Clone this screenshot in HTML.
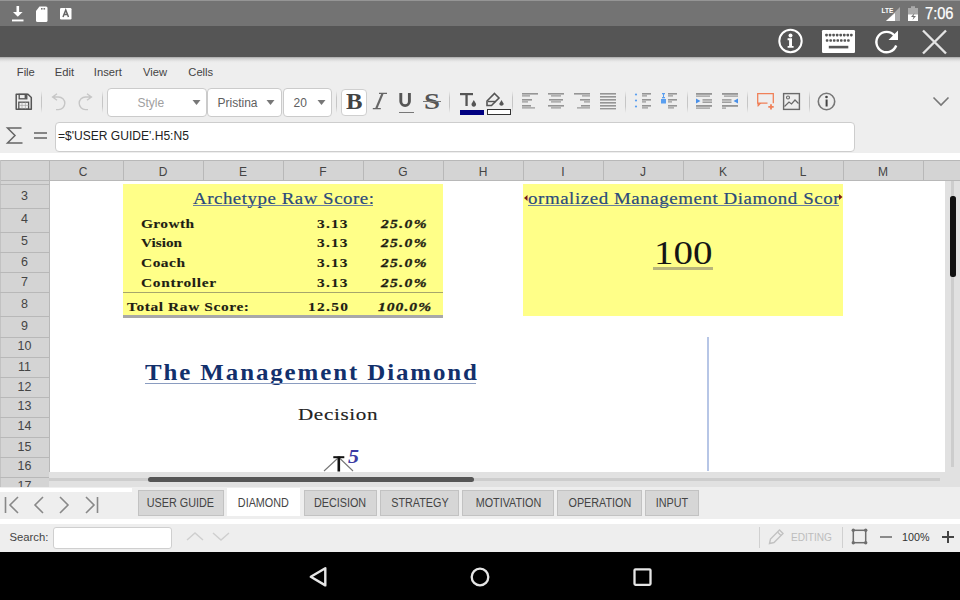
<!DOCTYPE html>
<html><head><meta charset="utf-8">
<style>
*{margin:0;padding:0;box-sizing:border-box}
html,body{width:960px;height:600px;overflow:hidden;background:#fff;font-family:"Liberation Sans",sans-serif}
.a{position:absolute}
.t{position:absolute;white-space:nowrap;line-height:1}
</style></head><body>

<div class="a" style="left:0px;top:0px;width:960px;height:26px;background:#737373;"></div>
<div class="a" style="left:0px;top:0px;width:960px;height:1px;background:#959595;"></div>
<svg class="a" style="left:10px;top:4px;" width="16" height="20" viewBox="0 0 16 20"><rect x="6.5" y="2" width="2.6" height="7.5" fill="#fff"/><path d="M3 8h9.6l-4.8 4.8z" fill="#fff"/><rect x="2" y="15.5" width="11.5" height="1.9" fill="#fff"/></svg>
<svg class="a" style="left:34px;top:4px;" width="16" height="20" viewBox="0 0 16 20"><path d="M5.5 2.5h6.5a1.5 1.5 0 0 1 1.5 1.5v12.5a1.5 1.5 0 0 1-1.5 1.5h-8.5a1.5 1.5 0 0 1-1.5-1.5v-9.5z" fill="#fff"/><rect x="7" y="4" width="1.6" height="1.6" fill="#777"/><rect x="9.5" y="4" width="1.6" height="1.6" fill="#777"/></svg>
<svg class="a" style="left:58px;top:6px;" width="16" height="16" viewBox="0 0 16 16"><rect x="2" y="2" width="11.5" height="11.5" rx="1.2" fill="#fff"/><path d="M5 11l2.75-7 2.75 7M6 8.6h3.5" stroke="#666" stroke-width="1.5" fill="none"/></svg>
<svg class="a" style="left:880px;top:4px;" width="24" height="20" viewBox="0 0 24 20"><path d="M6 17h14V3z" fill="#a8a8a8"/><path d="M6 17h9V9z" fill="#fff"/><text x="1.5" y="8.5" font-family="Liberation Sans" font-size="6.5" font-weight="bold" fill="#fff">LTE</text></svg>
<svg class="a" style="left:906px;top:4px;" width="14" height="20" viewBox="0 0 14 20"><rect x="2" y="4" width="10" height="13" fill="#fff"/><rect x="2" y="4" width="10" height="6.5" fill="#aaa"/><rect x="5" y="2.2" width="4" height="2" fill="#aaa"/><path d="M8.5 9l-3.5 4h2.5l-1 3 3.5-4h-2.5z" fill="#737373"/></svg>
<div class="t" style="left:924.50px;top:6.06px;font-size:16px;font-family:'Liberation Sans',sans-serif;color:#fff;font-weight:normal;font-style:normal;transform:scaleX(0.9152032112393377);transform-origin:0 0;-webkit-text-stroke:0.25px #fff;">7:06</div>
<div class="a" style="left:0px;top:26px;width:960px;height:31px;background:#555;"></div>
<svg class="a" style="left:776px;top:28px;" width="28" height="28" viewBox="0 0 28 28"><circle cx="14.5" cy="13" r="11.2" stroke="#fff" stroke-width="2" fill="none"/><circle cx="14.5" cy="7.4" r="2" fill="#fff"/><path d="M11.6 10.3h4.4v7.6h1.6v1.9h-6v-1.9h1.5v-5.7h-1.5z" fill="#fff"/></svg>
<svg class="a" style="left:821px;top:29px;" width="36" height="26" viewBox="0 0 36 26"><rect x="1" y="1" width="33" height="23" rx="1.2" fill="#fff"/><rect x="4.20" y="4.8" width="2.6" height="2.6" rx="0.8" fill="#555"/><rect x="7.75" y="4.8" width="2.6" height="2.6" rx="0.8" fill="#555"/><rect x="11.30" y="4.8" width="2.6" height="2.6" rx="0.8" fill="#555"/><rect x="14.85" y="4.8" width="2.6" height="2.6" rx="0.8" fill="#555"/><rect x="18.40" y="4.8" width="2.6" height="2.6" rx="0.8" fill="#555"/><rect x="21.95" y="4.8" width="2.6" height="2.6" rx="0.8" fill="#555"/><rect x="25.50" y="4.8" width="2.6" height="2.6" rx="0.8" fill="#555"/><rect x="29.05" y="4.8" width="2.6" height="2.6" rx="0.8" fill="#555"/><rect x="4.80" y="10.2" width="2.6" height="2.6" rx="0.8" fill="#555"/><rect x="8.35" y="10.2" width="2.6" height="2.6" rx="0.8" fill="#555"/><rect x="11.90" y="10.2" width="2.6" height="2.6" rx="0.8" fill="#555"/><rect x="15.45" y="10.2" width="2.6" height="2.6" rx="0.8" fill="#555"/><rect x="19.00" y="10.2" width="2.6" height="2.6" rx="0.8" fill="#555"/><rect x="22.55" y="10.2" width="2.6" height="2.6" rx="0.8" fill="#555"/><rect x="26.10" y="10.2" width="2.6" height="2.6" rx="0.8" fill="#555"/><rect x="7.8" y="16.8" width="19.5" height="2.6" fill="#555"/></svg>
<svg class="a" style="left:872px;top:27px;" width="30" height="30" viewBox="0 0 30 30"><path d="M22.4 8.5A10.2 10.2 0 1 0 24.2 18.5" stroke="#fff" stroke-width="2.4" fill="none"/><path d="M26 3.5v9.5h-9.5z" fill="#fff"/></svg>
<svg class="a" style="left:920px;top:28px;" width="30" height="28" viewBox="0 0 30 28"><path d="M3 2.5L26 25.5M26 2.5L3 25.5" stroke="#e4e4e4" stroke-width="2.4"/></svg>
<div class="a" style="left:0px;top:57px;width:960px;height:96px;background:#eeeeee;"></div>
<div class="a" style="left:0px;top:57px;width:960px;height:6px;background:linear-gradient(#a8a8a8 0px,#cdcdcd 1.5px,#dedede 3px,#e9e9e9 4.5px,#eee 6px);"></div>
<div class="t" style="left:16.80px;top:66.52px;font-size:11.2px;font-family:'Liberation Sans',sans-serif;color:#444;font-weight:normal;font-style:normal;">File</div>
<div class="t" style="left:54.80px;top:66.52px;font-size:11.2px;font-family:'Liberation Sans',sans-serif;color:#444;font-weight:normal;font-style:normal;">Edit</div>
<div class="t" style="left:93.80px;top:66.52px;font-size:11.2px;font-family:'Liberation Sans',sans-serif;color:#444;font-weight:normal;font-style:normal;">Insert</div>
<div class="t" style="left:143.10px;top:66.52px;font-size:11.2px;font-family:'Liberation Sans',sans-serif;color:#444;font-weight:normal;font-style:normal;">View</div>
<div class="t" style="left:188.30px;top:66.52px;font-size:11.2px;font-family:'Liberation Sans',sans-serif;color:#444;font-weight:normal;font-style:normal;">Cells</div>
<svg class="a" style="left:14px;top:92px;" width="20" height="20" viewBox="0 0 20 20"><path d="M2.2 2.2h11.8l3.3 3.3v11.8h-15.1z" stroke="#555" stroke-width="1.5" fill="none" stroke-linejoin="round"/><rect x="5.2" y="2.4" width="7.6" height="4.4" stroke="#555" stroke-width="1.3" fill="none"/><rect x="10.6" y="2.6" width="2.2" height="4" fill="#555"/><rect x="4.8" y="10.2" width="9.8" height="7" stroke="#555" stroke-width="1.3" fill="none"/><path d="M4.8 13.4h9.8M8 10.2v7M11.4 10.2v7" stroke="#999" stroke-width="0.6"/></svg>
<div class="a" style="left:41px;top:91px;width:1.2px;height:22px;background:linear-gradient(rgba(200,200,200,0),#c6c6c6 30%,#c6c6c6 70%,rgba(200,200,200,0));"></div>
<svg class="a" style="left:50px;top:92px;" width="18" height="20" viewBox="0 0 18 20"><path d="M7 1.8L2.6 5 7 8.2M2.6 5H8.5A6.3 6.3 0 0 1 8.5 17.6H6" stroke="#c6c6c6" stroke-width="1.4" fill="none"/></svg>
<svg class="a" style="left:76px;top:92px;" width="18" height="20" viewBox="0 0 18 20"><path d="M11 1.8L15.4 5 11 8.2M15.4 5H9.5A6.3 6.3 0 0 0 9.5 17.6H12" stroke="#c6c6c6" stroke-width="1.4" fill="none"/></svg>
<div class="a" style="left:102px;top:91px;width:1.2px;height:22px;background:linear-gradient(rgba(200,200,200,0),#c6c6c6 30%,#c6c6c6 70%,rgba(200,200,200,0));"></div>
<div class="a" style="left:107px;top:88px;width:99.5px;height:28.5px;background:#fff;border:1.5px solid #cbcbcb;border-radius:4px"></div>
<div class="t" style="left:137.50px;top:97.14px;font-size:12px;font-family:'Liberation Sans',sans-serif;color:#a0a0a0;font-weight:normal;font-style:normal;">Style</div>
<svg class="a" style="left:191.5px;top:99px;" width="9" height="7" viewBox="0 0 9 7"><path d="M0.5 1h8l-4 5z" fill="#777"/></svg>
<div class="a" style="left:207px;top:88px;width:74.5px;height:28.5px;background:#fff;border:1.5px solid #cbcbcb;border-radius:4px"></div>
<div class="t" style="left:217.50px;top:97.14px;font-size:12px;font-family:'Liberation Sans',sans-serif;color:#5e5e5e;font-weight:normal;font-style:normal;">Pristina</div>
<svg class="a" style="left:266px;top:99px;" width="9" height="7" viewBox="0 0 9 7"><path d="M0.5 1h8l-4 5z" fill="#777"/></svg>
<div class="a" style="left:283px;top:88px;width:48.5px;height:28.5px;background:#fff;border:1.5px solid #cbcbcb;border-radius:4px"></div>
<div class="t" style="left:293.50px;top:97.14px;font-size:12px;font-family:'Liberation Sans',sans-serif;color:#5e5e5e;font-weight:normal;font-style:normal;">20</div>
<svg class="a" style="left:316.5px;top:99px;" width="9" height="7" viewBox="0 0 9 7"><path d="M0.5 1h8l-4 5z" fill="#777"/></svg>
<div class="a" style="left:336px;top:91px;width:1.2px;height:22px;background:linear-gradient(rgba(200,200,200,0),#c6c6c6 30%,#c6c6c6 70%,rgba(200,200,200,0));"></div>
<div class="a" style="left:341px;top:89px;width:25.5px;height:27px;background:#fff;border:1.5px solid #cfcfcf;border-radius:4px"></div>
<div class="t" style="left:345.50px;top:89.10px;font-size:24px;font-family:'Liberation Serif',serif;color:#444;font-weight:bold;font-style:normal;transform:scaleX(1.0302439024390244);transform-origin:0 0;">B</div>
<svg class="a" style="left:370px;top:91px;" width="20" height="20" viewBox="0 0 20 20"><path d="M12.6 2.4L6.2 17.6" stroke="#666" stroke-width="2.2"/><path d="M9 2.4h8M2.8 17.6h8" stroke="#666" stroke-width="1.4"/></svg>
<svg class="a" style="left:397px;top:91px;" width="18" height="18" viewBox="0 0 18 18"><path d="M3.8 2v8.3a4.3 4.3 0 0 0 8.6 0V2" stroke="#555" stroke-width="2.9" fill="none"/></svg>
<div class="a" style="left:399px;top:111.5px;width:14.5px;height:1.6px;background:#777;"></div>
<div class="t" style="left:424.00px;top:89.52px;font-size:23.5px;font-family:'Liberation Serif',serif;color:#555;font-weight:bold;font-style:normal;transform:scaleX(1.2234169653524491);transform-origin:0 0;">S</div>
<div class="a" style="left:422.5px;top:100.8px;width:18.5px;height:1.5px;background:#777;"></div>
<div class="a" style="left:449px;top:91px;width:1.2px;height:22px;background:linear-gradient(rgba(200,200,200,0),#c6c6c6 30%,#c6c6c6 70%,rgba(200,200,200,0));"></div>
<svg class="a" style="left:458px;top:91px;" width="20" height="18" viewBox="0 0 20 18"><rect x="2" y="2" width="13" height="2.2" fill="#555"/><rect x="7.4" y="2" width="2.3" height="13" fill="#555"/><path d="M15.8 9l-2.2 3.8a2.3 2.3 0 1 0 4.4 0z" fill="#555"/></svg>
<div class="a" style="left:460px;top:110px;width:24px;height:5px;background:#000080;"></div>
<svg class="a" style="left:485px;top:91px;" width="22" height="17" viewBox="0 0 22 17"><path d="M9.5 2.5l4.5 4.5-7.5 7.5h-4.5v-4.5z" stroke="#555" stroke-width="1.6" fill="none"/><path d="M3 10.5h8" stroke="#555" stroke-width="1.4"/><path d="M16.5 9l-2.3 4a2.4 2.4 0 0 0 4.6 0z" fill="#555"/></svg>
<div class="a" style="left:487px;top:109px;width:24px;height:6px;background:#fff;border:1px solid #333"></div>
<div class="a" style="left:512px;top:91px;width:1.2px;height:22px;background:linear-gradient(rgba(200,200,200,0),#c6c6c6 30%,#c6c6c6 70%,rgba(200,200,200,0));"></div>
<svg class="a" style="left:522px;top:92px;" width="18" height="18" viewBox="0 0 18 18"><rect x="0" y="1" width="16" height="1.6" fill="#959595"/><rect x="0" y="3.3" width="8" height="1.2" fill="#959595"/><rect x="0" y="7" width="10" height="1.6" fill="#959595"/><rect x="0" y="9.3" width="6" height="1.2" fill="#959595"/><rect x="0" y="13" width="9" height="1.6" fill="#959595"/><rect x="0" y="15.3" width="13" height="1.2" fill="#959595"/></svg>
<svg class="a" style="left:548px;top:92px;" width="18" height="18" viewBox="0 0 18 18"><rect x="0" y="1" width="16" height="1.6" fill="#959595"/><rect x="3" y="3.3" width="10" height="1.2" fill="#959595"/><rect x="1" y="7" width="14" height="1.6" fill="#959595"/><rect x="3" y="9.3" width="10" height="1.2" fill="#959595"/><rect x="0" y="13" width="16" height="1.6" fill="#959595"/><rect x="3" y="15.3" width="10" height="1.2" fill="#959595"/></svg>
<svg class="a" style="left:574px;top:92px;" width="18" height="18" viewBox="0 0 18 18"><rect x="0" y="1" width="16" height="1.6" fill="#959595"/><rect x="8" y="3.3" width="8" height="1.2" fill="#959595"/><rect x="6" y="7" width="10" height="1.6" fill="#959595"/><rect x="10" y="9.3" width="6" height="1.2" fill="#959595"/><rect x="7" y="13" width="9" height="1.6" fill="#959595"/><rect x="3" y="15.3" width="13" height="1.2" fill="#959595"/></svg>
<svg class="a" style="left:600px;top:92px;" width="18" height="18" viewBox="0 0 18 18"><rect x="0" y="1" width="16" height="1.6" fill="#959595"/><rect x="0" y="4" width="16" height="1.6" fill="#959595"/><rect x="0" y="7" width="16" height="1.6" fill="#959595"/><rect x="0" y="10" width="16" height="1.6" fill="#959595"/><rect x="0" y="13" width="16" height="1.6" fill="#959595"/><rect x="0" y="16" width="16" height="1.4" fill="#959595"/></svg>
<div class="a" style="left:625px;top:91px;width:1.2px;height:22px;background:linear-gradient(rgba(200,200,200,0),#c6c6c6 30%,#c6c6c6 70%,rgba(200,200,200,0));"></div>
<svg class="a" style="left:632px;top:92px;" width="22" height="18" viewBox="0 0 22 18"><circle cx="4" cy="2.5" r="1.1" fill="#5a9ff0"/><circle cx="4" cy="8.5" r="1.1" fill="#5a9ff0"/><circle cx="4" cy="14.5" r="1.1" fill="#5a9ff0"/><rect x="10" y="1" width="9" height="1.6" fill="#959595"/><rect x="10" y="3.3" width="5" height="1.2" fill="#959595"/><rect x="10" y="7" width="9" height="1.6" fill="#959595"/><rect x="10" y="9.3" width="4" height="1.2" fill="#959595"/><rect x="10" y="13" width="9" height="1.6" fill="#959595"/><rect x="10" y="15.3" width="6" height="1.2" fill="#959595"/></svg>
<svg class="a" style="left:659px;top:92px;" width="22" height="18" viewBox="0 0 22 18"><rect x="3" y="1" width="3" height="1.3" fill="#5a9ff0"/><rect x="4" y="2" width="1" height="3" fill="#5a9ff0"/><rect x="3" y="5" width="3" height="1.3" fill="#5a9ff0"/><rect x="2" y="7" width="5" height="4.5" fill="#5a9ff0"/><rect x="9" y="1" width="9" height="1.6" fill="#959595"/><rect x="9" y="3.3" width="5" height="1.2" fill="#959595"/><rect x="9" y="7" width="9" height="1.6" fill="#959595"/><rect x="9" y="9.3" width="4" height="1.2" fill="#959595"/><rect x="9" y="13" width="9" height="1.6" fill="#959595"/><rect x="9" y="15.3" width="6" height="1.2" fill="#959595"/></svg>
<div class="a" style="left:687px;top:91px;width:1.2px;height:22px;background:linear-gradient(rgba(200,200,200,0),#c6c6c6 30%,#c6c6c6 70%,rgba(200,200,200,0));"></div>
<svg class="a" style="left:694px;top:92px;" width="20" height="18" viewBox="0 0 20 18"><rect x="2" y="1" width="16" height="1.8" fill="#959595"/><rect x="2" y="3.5" width="14" height="1.2" fill="#959595"/><path d="M2 6.5l4.5 2.5-4.5 2.5z" fill="#4a90e8"/><rect x="8.5" y="7.2" width="9.5" height="1.4" fill="#959595"/><rect x="8.5" y="9.5" width="9.5" height="1.4" fill="#959595"/><rect x="2" y="13" width="16" height="1.8" fill="#959595"/><rect x="2" y="15.5" width="14" height="1.2" fill="#959595"/></svg>
<svg class="a" style="left:720px;top:92px;" width="20" height="18" viewBox="0 0 20 18"><rect x="2" y="1" width="16" height="1.8" fill="#959595"/><rect x="4" y="3.5" width="14" height="1.2" fill="#959595"/><path d="M18 6.5l-4.5 2.5 4.5 2.5z" fill="#4a90e8"/><rect x="2" y="7.2" width="9.5" height="1.4" fill="#959595"/><rect x="2" y="9.5" width="9.5" height="1.4" fill="#959595"/><rect x="2" y="13" width="16" height="1.8" fill="#959595"/><rect x="2" y="15.5" width="4" height="1.2" fill="#959595"/></svg>
<div class="a" style="left:747px;top:91px;width:1.2px;height:22px;background:linear-gradient(rgba(200,200,200,0),#c6c6c6 30%,#c6c6c6 70%,rgba(200,200,200,0));"></div>
<svg class="a" style="left:755px;top:91px;" width="22" height="20" viewBox="0 0 22 20"><path d="M12.5 12.2H2.7V2.7h15.6v9.5" stroke="#f08058" stroke-width="1.3" fill="none"/><path d="M3 12v3.3l3-3.3" fill="#f08058" stroke="#f08058" stroke-width="1"/><path d="M16 13.2v5.3M13.3 15.9h5.4" stroke="#f08058" stroke-width="1.8"/></svg>
<svg class="a" style="left:781px;top:91px;" width="21" height="21" viewBox="0 0 21 21"><rect x="2.6" y="2.6" width="15.8" height="15.8" stroke="#6a6a6a" stroke-width="1.4" fill="none"/><circle cx="7" cy="6.5" r="1.5" stroke="#6a6a6a" stroke-width="1.1" fill="none"/><path d="M3.5 15.5l4.5-4.5 2.5 2 3.5-4 3.5 3.5" stroke="#6a6a6a" stroke-width="1.2" fill="none"/></svg>
<div class="a" style="left:808.5px;top:91px;width:1.2px;height:22px;background:linear-gradient(rgba(200,200,200,0),#c6c6c6 30%,#c6c6c6 70%,rgba(200,200,200,0));"></div>
<svg class="a" style="left:816px;top:91px;" width="21" height="21" viewBox="0 0 21 21"><circle cx="10.5" cy="10.5" r="8.2" stroke="#777" stroke-width="1.6" fill="none"/><circle cx="10.5" cy="6" r="1.3" fill="#444"/><rect x="9.6" y="8.5" width="2" height="7" fill="#444"/></svg>
<svg class="a" style="left:930px;top:94px;" width="22" height="14" viewBox="0 0 22 14"><path d="M3.5 3.5l7.5 7.5 7.5-7.5" stroke="#777" stroke-width="1.6" fill="none"/></svg>
<svg class="a" style="left:4px;top:124px;" width="22" height="22" viewBox="0 0 22 22"><path d="M17.5 4H3.5l7.5 7.5-7.5 7.5h15" stroke="#666" stroke-width="1.5" fill="none"/></svg>
<div class="a" style="left:34px;top:131.6px;width:13px;height:2px;background:#858585;"></div>
<div class="a" style="left:34px;top:136.6px;width:13px;height:2px;background:#858585;"></div>
<div class="a" style="left:54.5px;top:122px;width:800px;height:29.5px;background:#fff;border:1.5px solid #cdcdcd;border-radius:4px"></div>
<div class="t" style="left:58.00px;top:129.59px;font-size:12.3px;font-family:'Liberation Sans',sans-serif;color:#222;font-weight:normal;font-style:normal;transform:scaleX(0.98);transform-origin:0 0;">=$'USER GUIDE'.H5:N5</div>
<div class="a" style="left:0px;top:153px;width:960px;height:334px;background:#fff;"></div>
<div class="a" style="left:0px;top:160px;width:960px;height:21px;background:#d4d4d4;"></div>
<div class="a" style="left:0px;top:160px;width:960px;height:1px;background:#b8b8b8;"></div>
<div class="a" style="left:0px;top:180px;width:960px;height:1px;background:#b8b8b8;"></div>
<div class="a" style="left:49px;top:161px;width:1px;height:19px;background:#b8b8b8;"></div>
<div class="a" style="left:123px;top:161px;width:1px;height:19px;background:#b8b8b8;"></div>
<div class="a" style="left:203px;top:161px;width:1px;height:19px;background:#b8b8b8;"></div>
<div class="a" style="left:283px;top:161px;width:1px;height:19px;background:#b8b8b8;"></div>
<div class="a" style="left:363px;top:161px;width:1px;height:19px;background:#b8b8b8;"></div>
<div class="a" style="left:443px;top:161px;width:1px;height:19px;background:#b8b8b8;"></div>
<div class="a" style="left:523px;top:161px;width:1px;height:19px;background:#b8b8b8;"></div>
<div class="a" style="left:603px;top:161px;width:1px;height:19px;background:#b8b8b8;"></div>
<div class="a" style="left:683px;top:161px;width:1px;height:19px;background:#b8b8b8;"></div>
<div class="a" style="left:763px;top:161px;width:1px;height:19px;background:#b8b8b8;"></div>
<div class="a" style="left:843px;top:161px;width:1px;height:19px;background:#b8b8b8;"></div>
<div class="a" style="left:923px;top:161px;width:1px;height:19px;background:#b8b8b8;"></div>
<div class="t" style="left:63px;top:166.04px;width:40px;text-align:center;font-size:12px;color:#444">C</div>
<div class="t" style="left:143px;top:166.04px;width:40px;text-align:center;font-size:12px;color:#444">D</div>
<div class="t" style="left:223px;top:166.04px;width:40px;text-align:center;font-size:12px;color:#444">E</div>
<div class="t" style="left:303px;top:166.04px;width:40px;text-align:center;font-size:12px;color:#444">F</div>
<div class="t" style="left:383px;top:166.04px;width:40px;text-align:center;font-size:12px;color:#444">G</div>
<div class="t" style="left:463px;top:166.04px;width:40px;text-align:center;font-size:12px;color:#444">H</div>
<div class="t" style="left:543px;top:166.04px;width:40px;text-align:center;font-size:12px;color:#444">I</div>
<div class="t" style="left:623px;top:166.04px;width:40px;text-align:center;font-size:12px;color:#444">J</div>
<div class="t" style="left:703px;top:166.04px;width:40px;text-align:center;font-size:12px;color:#444">K</div>
<div class="t" style="left:783px;top:166.04px;width:40px;text-align:center;font-size:12px;color:#444">L</div>
<div class="t" style="left:863px;top:166.04px;width:40px;text-align:center;font-size:12px;color:#444">M</div>
<div class="a" style="left:0px;top:181px;width:49px;height:306px;background:#d4d4d4;"></div>
<div class="a" style="left:49px;top:181px;width:1px;height:306px;background:#b8b8b8;"></div>
<div class="a" style="left:0px;top:160px;width:1px;height:327px;background:#c2c2c2;"></div>
<div class="a" style="left:0px;top:184px;width:49px;height:1px;background:#b8b8b8;"></div>
<div class="a" style="left:0px;top:208px;width:49px;height:1px;background:#b8b8b8;"></div>
<div class="a" style="left:0px;top:232px;width:49px;height:1px;background:#b8b8b8;"></div>
<div class="a" style="left:0px;top:252px;width:49px;height:1px;background:#b8b8b8;"></div>
<div class="a" style="left:0px;top:272px;width:49px;height:1px;background:#b8b8b8;"></div>
<div class="a" style="left:0px;top:292px;width:49px;height:1px;background:#b8b8b8;"></div>
<div class="a" style="left:0px;top:316px;width:49px;height:1px;background:#b8b8b8;"></div>
<div class="a" style="left:0px;top:337px;width:49px;height:1px;background:#b8b8b8;"></div>
<div class="a" style="left:0px;top:357px;width:49px;height:1px;background:#b8b8b8;"></div>
<div class="a" style="left:0px;top:377px;width:49px;height:1px;background:#b8b8b8;"></div>
<div class="a" style="left:0px;top:397px;width:49px;height:1px;background:#b8b8b8;"></div>
<div class="a" style="left:0px;top:417px;width:49px;height:1px;background:#b8b8b8;"></div>
<div class="a" style="left:0px;top:437px;width:49px;height:1px;background:#b8b8b8;"></div>
<div class="a" style="left:0px;top:457px;width:49px;height:1px;background:#b8b8b8;"></div>
<div class="a" style="left:0px;top:477px;width:49px;height:1px;background:#b8b8b8;"></div>
<div class="t" style="left:0px;top:190.12px;width:49px;text-align:center;font-size:12.5px;color:#444">3</div>
<div class="t" style="left:0px;top:213.42px;width:49px;text-align:center;font-size:12.5px;color:#444">4</div>
<div class="t" style="left:0px;top:235.42px;width:49px;text-align:center;font-size:12.5px;color:#444">5</div>
<div class="t" style="left:0px;top:255.92px;width:49px;text-align:center;font-size:12.5px;color:#444">6</div>
<div class="t" style="left:0px;top:276.12px;width:49px;text-align:center;font-size:12.5px;color:#444">7</div>
<div class="t" style="left:0px;top:297.92px;width:49px;text-align:center;font-size:12.5px;color:#444">8</div>
<div class="t" style="left:0px;top:320.42px;width:49px;text-align:center;font-size:12.5px;color:#444">9</div>
<div class="t" style="left:0px;top:340.42px;width:49px;text-align:center;font-size:12.5px;color:#444">10</div>
<div class="t" style="left:0px;top:360.62px;width:49px;text-align:center;font-size:12.5px;color:#444">11</div>
<div class="t" style="left:0px;top:380.92px;width:49px;text-align:center;font-size:12.5px;color:#444">12</div>
<div class="t" style="left:0px;top:400.42px;width:49px;text-align:center;font-size:12.5px;color:#444">13</div>
<div class="t" style="left:0px;top:420.42px;width:49px;text-align:center;font-size:12.5px;color:#444">14</div>
<div class="t" style="left:0px;top:440.62px;width:49px;text-align:center;font-size:12.5px;color:#444">15</div>
<div class="t" style="left:0px;top:460.12px;width:49px;text-align:center;font-size:12.5px;color:#444">16</div>
<div class="t" style="left:0px;top:480.42px;width:49px;text-align:center;font-size:12.5px;color:#444">17</div>
<div class="a" style="left:123px;top:184px;width:320px;height:131px;background:#ffff88;"></div>
<div class="a" style="left:123px;top:292px;width:320px;height:1.4px;background:#a6a66c;"></div>
<div class="a" style="left:123px;top:315px;width:320px;height:3px;background:#a8a8a8;"></div>
<div class="t" style="left:192.50px;top:189.79px;font-size:17.2px;font-family:'Liberation Serif',serif;color:#2b4a7c;font-weight:normal;font-style:normal;transform:scaleX(1.1);transform-origin:0 0;-webkit-text-stroke:0.2px #2b4a7c;letter-spacing:0.471px;">Archetype Raw Score:</div>
<div class="a" style="left:193px;top:205px;width:180px;height:1px;background:#6a7fa0;"></div>
<div class="t" style="left:140.50px;top:216.66px;font-size:13.3px;font-family:'Liberation Serif',serif;color:#1e1e14;font-weight:bold;font-style:normal;transform:scaleX(1.16);transform-origin:0 0;-webkit-text-stroke:0.12px #1e1e14;letter-spacing:0.319px;">Growth</div>
<div class="t" style="left:316.50px;top:216.66px;font-size:13.3px;font-family:'Liberation Serif',serif;color:#1e1e14;font-weight:bold;font-style:normal;transform:scaleX(1.16);transform-origin:0 0;-webkit-text-stroke:0.12px #1e1e14;letter-spacing:1.004px;">3.13</div>
<div class="t" style="left:380.50px;top:216.66px;font-size:13.3px;font-family:'Liberation Serif',serif;color:#1e1e14;font-weight:bold;font-style:italic;transform:scaleX(1.16);transform-origin:0 0;-webkit-text-stroke:0.35px #1e1e14;letter-spacing:1.216px;">25.0%</div>
<div class="t" style="left:140.50px;top:236.46px;font-size:13.3px;font-family:'Liberation Serif',serif;color:#1e1e14;font-weight:bold;font-style:normal;transform:scaleX(1.147856517935258);transform-origin:0 0;-webkit-text-stroke:0.12px #1e1e14;">Vision</div>
<div class="t" style="left:316.50px;top:236.46px;font-size:13.3px;font-family:'Liberation Serif',serif;color:#1e1e14;font-weight:bold;font-style:normal;transform:scaleX(1.16);transform-origin:0 0;-webkit-text-stroke:0.12px #1e1e14;letter-spacing:1.004px;">3.13</div>
<div class="t" style="left:380.50px;top:236.46px;font-size:13.3px;font-family:'Liberation Serif',serif;color:#1e1e14;font-weight:bold;font-style:italic;transform:scaleX(1.16);transform-origin:0 0;-webkit-text-stroke:0.35px #1e1e14;letter-spacing:1.216px;">25.0%</div>
<div class="t" style="left:140.50px;top:256.46px;font-size:13.3px;font-family:'Liberation Serif',serif;color:#1e1e14;font-weight:bold;font-style:normal;transform:scaleX(1.16);transform-origin:0 0;-webkit-text-stroke:0.12px #1e1e14;letter-spacing:0.432px;">Coach</div>
<div class="t" style="left:316.50px;top:256.46px;font-size:13.3px;font-family:'Liberation Serif',serif;color:#1e1e14;font-weight:bold;font-style:normal;transform:scaleX(1.16);transform-origin:0 0;-webkit-text-stroke:0.12px #1e1e14;letter-spacing:1.004px;">3.13</div>
<div class="t" style="left:380.50px;top:256.46px;font-size:13.3px;font-family:'Liberation Serif',serif;color:#1e1e14;font-weight:bold;font-style:italic;transform:scaleX(1.16);transform-origin:0 0;-webkit-text-stroke:0.35px #1e1e14;letter-spacing:1.216px;">25.0%</div>
<div class="t" style="left:140.50px;top:276.46px;font-size:13.3px;font-family:'Liberation Serif',serif;color:#1e1e14;font-weight:bold;font-style:normal;transform:scaleX(1.16);transform-origin:0 0;-webkit-text-stroke:0.12px #1e1e14;letter-spacing:0.564px;">Controller</div>
<div class="t" style="left:316.50px;top:276.46px;font-size:13.3px;font-family:'Liberation Serif',serif;color:#1e1e14;font-weight:bold;font-style:normal;transform:scaleX(1.16);transform-origin:0 0;-webkit-text-stroke:0.12px #1e1e14;letter-spacing:1.004px;">3.13</div>
<div class="t" style="left:380.50px;top:276.46px;font-size:13.3px;font-family:'Liberation Serif',serif;color:#1e1e14;font-weight:bold;font-style:italic;transform:scaleX(1.16);transform-origin:0 0;-webkit-text-stroke:0.35px #1e1e14;letter-spacing:1.216px;">25.0%</div>
<div class="t" style="left:126.50px;top:299.86px;font-size:13.3px;font-family:'Liberation Serif',serif;color:#1e1e14;font-weight:bold;font-style:normal;transform:scaleX(1.16);transform-origin:0 0;-webkit-text-stroke:0.12px #1e1e14;letter-spacing:0.510px;">Total Raw Score:</div>
<div class="t" style="left:308.00px;top:299.86px;font-size:13.3px;font-family:'Liberation Serif',serif;color:#1e1e14;font-weight:bold;font-style:normal;transform:scaleX(1.16);transform-origin:0 0;-webkit-text-stroke:0.12px #1e1e14;letter-spacing:1.140px;">12.50</div>
<div class="t" style="left:377.50px;top:299.86px;font-size:13.3px;font-family:'Liberation Serif',serif;color:#1e1e14;font-weight:bold;font-style:italic;transform:scaleX(1.16);transform-origin:0 0;-webkit-text-stroke:0.35px #1e1e14;letter-spacing:0.938px;">100.0%</div>
<div class="a" style="left:523px;top:184px;width:320px;height:131.6px;background:#ffff88;"></div>
<div class="t" style="left:527.50px;top:189.79px;font-size:17.2px;font-family:'Liberation Serif',serif;color:#2b4a7c;font-weight:normal;font-style:normal;transform:scaleX(1.1);transform-origin:0 0;-webkit-text-stroke:0.2px #2b4a7c;letter-spacing:0.512px;">ormalized Management Diamond Scor</div>
<div class="a" style="left:528px;top:205px;width:311px;height:1px;background:#6a7fa0;"></div>
<svg class="a" style="left:522px;top:194px;" width="8" height="8" viewBox="0 0 8 8"><path d="M5.5 1L2 4l3.5 3z" fill="#7a1a1a"/></svg>
<svg class="a" style="left:837px;top:193px;" width="8" height="8" viewBox="0 0 8 8"><path d="M2 1l3.5 3L2 7z" fill="#7a1a1a"/></svg>
<div class="t" style="left:653.50px;top:235.94px;font-size:33.5px;font-family:'Liberation Serif',serif;color:#151515;font-weight:normal;font-style:normal;transform:scaleX(1.164179104477612);transform-origin:0 0;">100</div>
<div class="a" style="left:653px;top:267px;width:60px;height:3px;background:#b9b57a;"></div>
<div class="t" style="left:144.50px;top:360.82px;font-size:23.5px;font-family:'Liberation Serif',serif;color:#12306c;font-weight:bold;font-style:normal;transform:scaleX(1.06);transform-origin:0 0;letter-spacing:1.796px;">The Management Diamond</div>
<div class="a" style="left:145px;top:383px;width:331px;height:1px;background:#8a9cc0;"></div>
<div class="t" style="left:297.50px;top:405.51px;font-size:17.3px;font-family:'Liberation Serif',serif;color:#222;font-weight:normal;font-style:normal;transform:scaleX(1.22);transform-origin:0 0;-webkit-text-stroke:0.15px #222;letter-spacing:0.532px;">Decision</div>
<svg class="a" style="left:320px;top:450px;" width="40" height="24" viewBox="0 0 40 24"><path d="M4 21L17.5 8.5M20 8.5L33 21" stroke="#777" stroke-width="1.1" fill="none"/><rect x="13.3" y="6.2" width="11" height="2" fill="#111"/><rect x="17.5" y="6.5" width="2.6" height="15" fill="#111"/></svg>
<div class="t" style="left:347.50px;top:447.51px;font-size:18.5px;font-family:'Liberation Serif',serif;color:#3c3ca4;font-weight:bold;font-style:italic;transform:scaleX(1.1891891891891893);transform-origin:0 0;">5</div>
<div class="a" style="left:707px;top:337px;width:2px;height:134px;background:#b7c6e6;"></div>
<div class="a" style="left:944.5px;top:181px;width:15.5px;height:306px;background:#e1e1e1;"></div>
<div class="a" style="left:951px;top:181px;width:3.2px;height:286px;background:#cdcdcd;"></div>
<div class="a" style="left:950px;top:196px;width:5.5px;height:81px;background:#111;border-radius:2.5px"></div>
<div class="a" style="left:49px;top:471.5px;width:911px;height:15.5px;background:#e1e1e1;"></div>
<div class="a" style="left:49px;top:478px;width:891px;height:3.2px;background:#cdcdcd;"></div>
<div class="a" style="left:148px;top:477px;width:326px;height:5.3px;background:#555;border-radius:2.5px"></div>
<div class="a" style="left:0px;top:487px;width:960px;height:32px;background:#eeeeee;"></div>
<div class="a" style="left:0px;top:487.5px;width:132px;height:4px;background:#fff;"></div>
<svg class="a" style="left:3px;top:494px;" width="20" height="22" viewBox="0 0 20 22"><path d="M2.5 3v16" stroke="#888" stroke-width="1.6"/><path d="M15 3L7 11l8 8" stroke="#888" stroke-width="1.6" fill="none"/></svg>
<svg class="a" style="left:31px;top:494px;" width="20" height="22" viewBox="0 0 20 22"><path d="M12 3L4 11l8 8" stroke="#888" stroke-width="1.6" fill="none"/></svg>
<svg class="a" style="left:56px;top:494px;" width="20" height="22" viewBox="0 0 20 22"><path d="M4 3l8 8-8 8" stroke="#888" stroke-width="1.6" fill="none"/></svg>
<svg class="a" style="left:83px;top:494px;" width="20" height="22" viewBox="0 0 20 22"><path d="M14.5 3v16" stroke="#888" stroke-width="1.6"/><path d="M3 3l8 8-8 8" stroke="#888" stroke-width="1.6" fill="none"/></svg>
<div class="a" style="left:138px;top:490px;width:85.5px;height:25.5px;background:#d6d6d6;border:1px solid #c2c2c2"></div>
<div class="t" style="left:138px;top:496.64px;width:85.5px;text-align:center;font-size:12px;color:#444"><span style="display:inline-block;transform:scaleX(0.9)">USER GUIDE</span></div>
<div class="a" style="left:227px;top:487.5px;width:72.5px;height:28px;background:#fff"></div>
<div class="t" style="left:227px;top:496.64px;width:72.5px;text-align:center;font-size:12px;color:#444"><span style="display:inline-block;transform:scaleX(0.9)">DIAMOND</span></div>
<div class="a" style="left:304px;top:490px;width:73px;height:25.5px;background:#d6d6d6;border:1px solid #c2c2c2"></div>
<div class="t" style="left:304px;top:496.64px;width:73px;text-align:center;font-size:12px;color:#444"><span style="display:inline-block;transform:scaleX(0.9)">DECISION</span></div>
<div class="a" style="left:380px;top:490px;width:79px;height:25.5px;background:#d6d6d6;border:1px solid #c2c2c2"></div>
<div class="t" style="left:380px;top:496.64px;width:79px;text-align:center;font-size:12px;color:#444"><span style="display:inline-block;transform:scaleX(0.9)">STRATEGY</span></div>
<div class="a" style="left:462px;top:490px;width:92px;height:25.5px;background:#d6d6d6;border:1px solid #c2c2c2"></div>
<div class="t" style="left:462px;top:496.64px;width:92px;text-align:center;font-size:12px;color:#444"><span style="display:inline-block;transform:scaleX(0.9)">MOTIVATION</span></div>
<div class="a" style="left:557px;top:490px;width:85px;height:25.5px;background:#d6d6d6;border:1px solid #c2c2c2"></div>
<div class="t" style="left:557px;top:496.64px;width:85px;text-align:center;font-size:12px;color:#444"><span style="display:inline-block;transform:scaleX(0.9)">OPERATION</span></div>
<div class="a" style="left:645px;top:490px;width:54px;height:25.5px;background:#d6d6d6;border:1px solid #c2c2c2"></div>
<div class="t" style="left:645px;top:496.64px;width:54px;text-align:center;font-size:12px;color:#444"><span style="display:inline-block;transform:scaleX(0.9)">INPUT</span></div>
<div class="a" style="left:0px;top:518.5px;width:960px;height:5.5px;background:#fff;"></div>
<div class="a" style="left:0px;top:524px;width:960px;height:28px;background:#eeeeee;"></div>
<div class="t" style="left:9.50px;top:531.93px;font-size:11.3px;font-family:'Liberation Sans',sans-serif;color:#444;font-weight:normal;font-style:normal;">Search:</div>
<div class="a" style="left:53px;top:527px;width:118.5px;height:22px;background:#fff;border:1px solid #cfcfcf;border-radius:3px"></div>
<svg class="a" style="left:185px;top:531px;" width="20" height="12" viewBox="0 0 20 12"><path d="M2 9l8-7 8 7" stroke="#cfcfcf" stroke-width="1.4" fill="none"/></svg>
<svg class="a" style="left:211px;top:531px;" width="20" height="12" viewBox="0 0 20 12"><path d="M2 2l8 7 8-7" stroke="#cfcfcf" stroke-width="1.4" fill="none"/></svg>
<div class="a" style="left:759px;top:527px;width:1px;height:21px;background:#d0d0d0;"></div>
<svg class="a" style="left:766px;top:527px;" width="20" height="20" viewBox="0 0 20 20"><path d="M3.5 16.5l1-4.5 9-9 3.5 3.5-9 9z" stroke="#c2c2c2" stroke-width="1.4" fill="none"/><path d="M11.5 5l3.5 3.5" stroke="#c2c2c2" stroke-width="1.2"/></svg>
<div class="t" style="left:790.50px;top:532.19px;font-size:11px;font-family:'Liberation Sans',sans-serif;color:#bdbdbd;font-weight:normal;font-style:normal;transform:scaleX(0.9186645753977145);transform-origin:0 0;">EDITING</div>
<div class="a" style="left:842px;top:527px;width:1px;height:21px;background:#d0d0d0;"></div>
<svg class="a" style="left:849px;top:526px;" width="21" height="21" viewBox="0 0 21 21"><rect x="4.3" y="4.3" width="12.4" height="12.4" stroke="#6e6e6e" stroke-width="1.5" fill="none"/><circle cx="4.3" cy="4.3" r="1.7" fill="#6e6e6e"/><circle cx="16.7" cy="4.3" r="1.7" fill="#6e6e6e"/><circle cx="4.3" cy="16.7" r="1.7" fill="#6e6e6e"/><circle cx="16.7" cy="16.7" r="1.7" fill="#6e6e6e"/></svg>
<div class="a" style="left:880px;top:536px;width:11.5px;height:1.6px;background:#8a8a8a;"></div>
<div class="t" style="left:902.00px;top:531.93px;font-size:11.3px;font-family:'Liberation Sans',sans-serif;color:#333;font-weight:normal;font-style:normal;transform:scaleX(0.9515570934256056);transform-origin:0 0;">100%</div>
<div class="a" style="left:941.5px;top:535.8px;width:12px;height:2px;background:#444;"></div>
<div class="a" style="left:946.5px;top:530.6px;width:2px;height:12px;background:#444;"></div>
<div class="a" style="left:0px;top:552px;width:960px;height:48px;background:#000;"></div>
<svg class="a" style="left:303px;top:562px;" width="26" height="30" viewBox="0 0 26 30"><path d="M22.3 6.2v17.2l-14.5-8.6z" stroke="#e6e6e6" stroke-width="2.4" fill="none" stroke-linejoin="round"/></svg>
<svg class="a" style="left:466px;top:563px;" width="28" height="28" viewBox="0 0 28 28"><circle cx="14" cy="14" r="8.3" stroke="#e6e6e6" stroke-width="2.3" fill="none"/></svg>
<svg class="a" style="left:628px;top:563px;" width="28" height="28" viewBox="0 0 28 28"><rect x="6.5" y="6.3" width="16" height="15.5" rx="1" stroke="#e6e6e6" stroke-width="2.3" fill="none"/></svg>
</body></html>
